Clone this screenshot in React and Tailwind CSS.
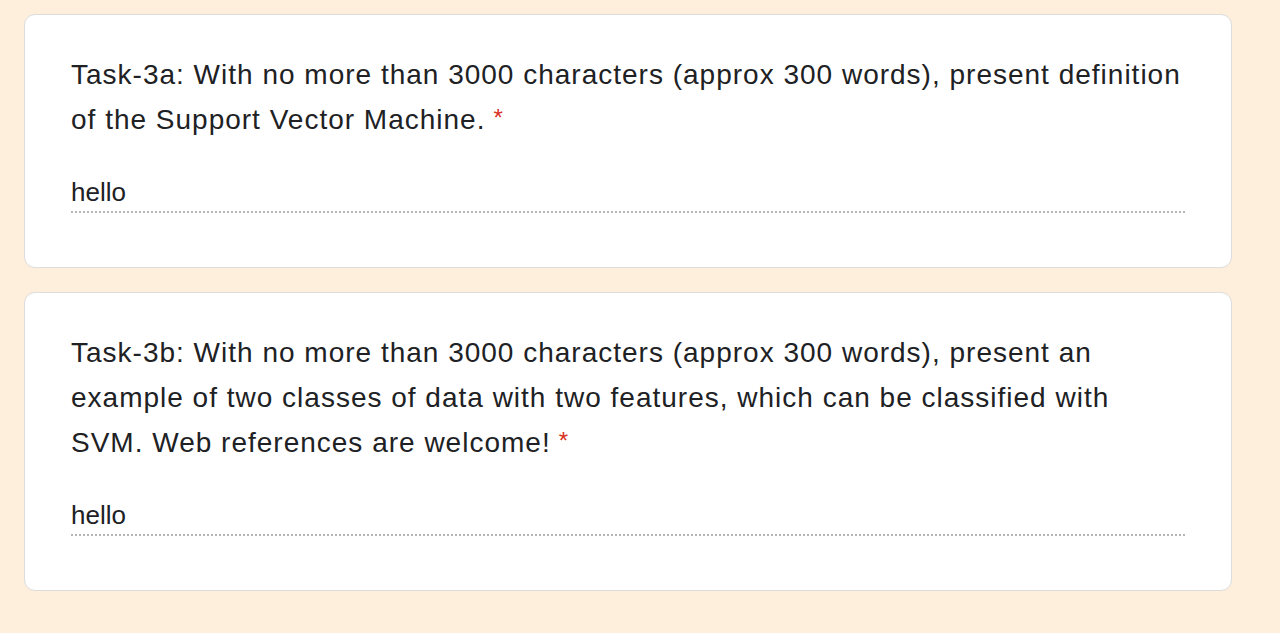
function Question({ lines, answer }) {
  return (
    <div className="w-[1208px] ml-[24px] bg-white border border-[#dcdcdc] rounded-[11px] pt-[37px] pb-[54px] pl-[46px] pr-[46px]">
      <div className="text-[28px] leading-[45px] tracking-[1px] text-[#202124]">
        {lines}
        <span className="text-[#d93025] text-[24px] align-top pl-[8px] relative top-[-2px]">*</span>
      </div>
      <div className="mt-[35px] text-[26px] leading-[30px] text-[#202124] pb-[4px] border-b-2 border-dotted border-[#b5b5b5]">
        {answer}
      </div>
    </div>
  )
}

export default function App() {
  return (
    <div className="w-[1280px] h-[633px] bg-[#fdefdc] pt-[14px] overflow-hidden" style={{ fontFamily: '"Liberation Sans", Arial, sans-serif' }}>
      <Question
        lines={<>Task-3a: With no more than 3000 characters (approx 300 words), present definition<br />of the Support Vector Machine.</>}
        answer="hello"
      />
      <div className="h-[24px]" />
      <Question
        lines={<>Task-3b: With no more than 3000 characters (approx 300 words), present an<br />example of two classes of data with two features, which can be classified with<br />SVM. Web references are welcome!</>}
        answer="hello"
      />
    </div>
  )
}
